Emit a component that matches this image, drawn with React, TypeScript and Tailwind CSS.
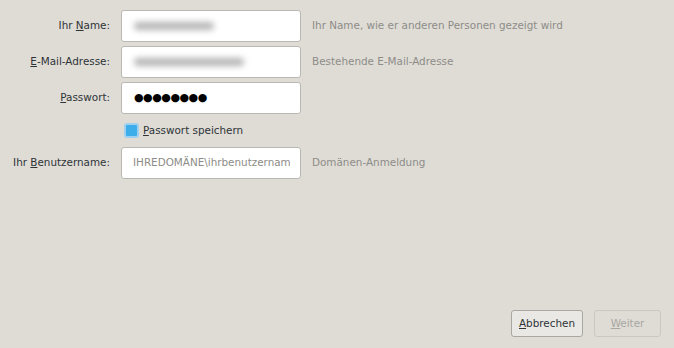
import React from 'react';

const font = { fontFamily: '"DejaVu Sans", sans-serif' };

const Blur = ({ w }: { w: string }) => (
  <div className={`h-[8px] ${w} rounded-full bg-[#b4b4b4] blur-[3px]`} />
);

const App = () => {
  return (
    <div className="w-[674px] h-[348px] bg-[#dfdcd6] flex flex-col text-[10.4px] text-[#2e3436]" style={font}>
      <div className="grid grid-cols-[110px_180px_1fr] gap-x-[11px] gap-y-[4px] pt-[10px] items-center">
        <div className="text-right">Ihr <span className="underline">N</span>ame:</div>
        <div className="h-[32px] rounded-[3px] border border-[#bab8b2] bg-white flex items-center px-[12px]">
          <Blur w="w-[80px]" />
        </div>
        <div className="text-[#8d8c88]">Ihr Name, wie er anderen Personen gezeigt wird</div>

        <div className="text-right"><span className="underline">E</span>-Mail-Adresse:</div>
        <div className="h-[32px] rounded-[3px] border border-[#bab8b2] bg-white flex items-center px-[12px]">
          <Blur w="w-[110px]" />
        </div>
        <div className="text-[#8d8c88]">Bestehende E-Mail-Adresse</div>

        <div className="text-right"><span className="underline">P</span>asswort:</div>
        <div className="h-[32px] rounded-[3px] border border-[#bab8b2] bg-white flex items-center px-[12px] text-[11px] text-black tracking-[-0.5px]">
          ●●●●●●●●
        </div>
        <div />

        <div />
        <div className="h-[25px] flex items-center gap-[4px] pl-[3px]">
          <div className="w-[15px] h-[15px] rounded-[3px] border-2 border-[#9fd0f0] bg-[#3daee9]" />
          <span><span className="underline">P</span>asswort speichern</span>
        </div>
        <div />

        <div className="text-right">Ihr <span className="underline">B</span>enutzername:</div>
        <div className="h-[32px] rounded-[3px] border border-[#bab8b2] bg-white flex items-center pl-[11px] pr-[10px] text-[#8d8c88]">
          <div className="overflow-hidden whitespace-nowrap">IHREDOMÄNE\ihrbenutzername</div>
        </div>
        <div className="text-[#8d8c88]">Domänen-Anmeldung</div>
      </div>

      <div className="flex-1" />

      <div className="flex justify-end gap-[11px] pr-[13px] pb-[11px]">
        <button className="w-[72px] h-[27px] rounded-[3px] border border-[#a9a7a1] bg-[#e9e8e4] text-[10.4px] text-[#2e3436]" style={font}>
          <span className="underline">A</span>bbrechen
        </button>
        <button className="w-[67px] h-[27px] rounded-[3px] border border-[#cac8c2] bg-[#dfdcd6] text-[10.4px] text-[#a9a7a1]" style={font}>
          <span className="underline">W</span>eiter
        </button>
      </div>
    </div>
  );
};

export default App;
